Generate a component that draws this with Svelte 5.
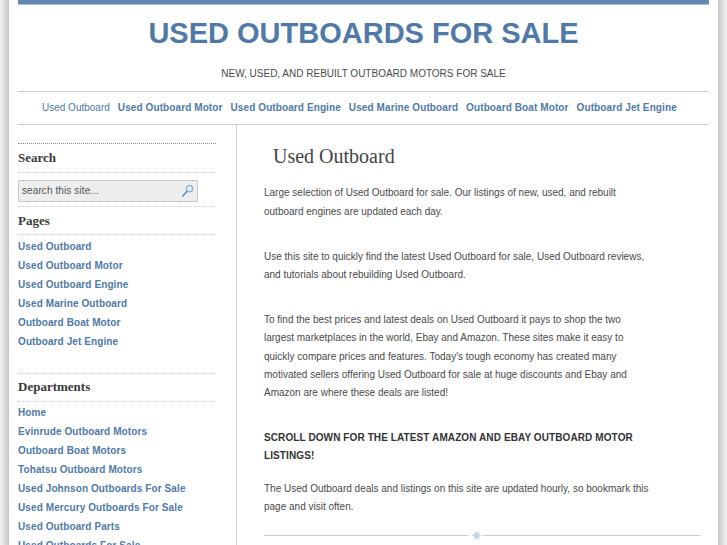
<script>
  const topNav = ['Used Outboard Motor', 'Used Outboard Engine', 'Used Marine Outboard', 'Outboard Boat Motor', 'Outboard Jet Engine'];
  const pages = ['Used Outboard', ...topNav];
  const departments = [
    'Home',
    'Evinrude Outboard Motors',
    'Outboard Boat Motors',
    'Tohatsu Outboard Motors',
    'Used Johnson Outboards For Sale',
    'Used Mercury Outboards For Sale',
    'Used Outboard Parts',
    'Used Outboards For Sale',
  ];
</script>

<div class="page">
  <div class="wrap">
    <div class="topbar"></div>
    <header class="header">
      <h1>USED OUTBOARDS FOR SALE</h1>
      <p>NEW, USED, AND REBUILT OUTBOARD MOTORS FOR SALE</p>
    </header>
    <nav class="topnav">
      <a href="#home" class="current">Used Outboard</a>
      {#each topNav as item}
        <a href="#top">{item}</a>
      {/each}
    </nav>
    <div class="columns">
      <aside class="sidebar">
        <h3 class="first">Search</h3>
        <div class="search">
          <span>search this site...</span>
          <svg width="13" height="14" viewBox="0 0 13 14" fill="none">
            <circle cx="8.5" cy="4.7" r="3.2" stroke="#8fb0cf" stroke-width="1.3" fill="#e6eef5" />
            <path d="M6 7.3 1.8 12" stroke="#6f94b8" stroke-width="1.8" stroke-linecap="round" />
          </svg>
        </div>
        <h3 class="pages">Pages</h3>
        <ul>
          {#each pages as item}
            <li><a href="#top">{item}</a></li>
          {/each}
        </ul>
        <h3 class="departments">Departments</h3>
        <ul>
          {#each departments as item}
            <li><a href="#top">{item}</a></li>
          {/each}
        </ul>
      </aside>
      <main class="content">
        <h2>Used Outboard</h2>
        <p>Large selection of Used Outboard for sale. Our listings of new, used, and rebuilt outboard engines are updated each day.</p>
        <p>Use this site to quickly find the latest Used Outboard for sale, Used Outboard reviews, and tutorials about rebuilding Used Outboard.</p>
        <p>To find the best prices and latest deals on Used Outboard it pays to shop the two largest marketplaces in the world, Ebay and Amazon. These sites make it easy to quickly compare prices and features. Today's tough economy has created many motivated sellers offering Used Outboard for sale at huge discounts and Ebay and Amazon are where these deals are listed!</p>
        <p class="strong">SCROLL DOWN FOR THE LATEST AMAZON AND EBAY OUTBOARD MOTOR LISTINGS!</p>
        <p class="last">The Used Outboard deals and listings on this site are updated hourly, so bookmark this page and visit often.</p>
        <div class="divider">
          <span class="rule left"></span>
          <svg width="9" height="9" viewBox="0 0 9 9" fill="none" stroke="#c3d4e6" stroke-width="1.2">
            <circle cx="4.5" cy="4.5" r="2.4" fill="#e4ecf4" />
            <path d="M4.5 0v9M0 4.5h9M1.3 1.3l6.4 6.4M7.7 1.3 1.3 7.7" stroke-width="0.9" />
          </svg>
          <span class="rule"></span>
        </div>
      </main>
    </div>
  </div>
</div>

<style>
  :global(body) {
    margin: 0;
    background: #fff;
  }

  .page {
    height: 545px;
    overflow: hidden;
    padding: 0 9px;
    font-family: "Liberation Sans", Arial, sans-serif;
    color: #444;
    background: linear-gradient(to right, #f2f2f2 0, #e6e6e6 3px, #c4c4c4 9px, #fff 9px, #fff 718px, #c4c4c4 718px, #e6e6e6 724px, #f2f2f2 727px);
  }

  .wrap {
    background: #fff;
    padding: 0 9px;
    min-height: 545px;
  }

  .topbar {
    height: 4px;
    background: #6389b3;
    border-bottom: 1px solid #a9c0d8;
  }

  .header {
    text-align: center;
  }

  h1 {
    margin: 0;
    padding-top: 12px;
    font-size: 29px;
    line-height: 33px;
    font-weight: 700;
    color: #4f79a8;
  }

  .header p {
    margin: 16px 0 0;
    font-size: 10px;
    line-height: 16px;
    color: #4a4a4a;
  }

  .topnav {
    margin-top: 9px;
    border-top: 1px solid #ccc;
    border-bottom: 1px solid #ccc;
    height: 31px;
    padding-bottom: 1px;
    display: flex;
    align-items: center;
    padding-left: 24px;
    gap: 8px;
    font-size: 10px;
  }

  a {
    color: #4f79a8;
    font-weight: 700;
    letter-spacing: 0.1px;
    text-decoration: none;
  }

  .topnav a.current {
    font-weight: 400;
    letter-spacing: 0;
  }

  .columns {
    display: flex;
  }

  .sidebar {
    width: 198px;
    padding-top: 18px;
    padding-right: 20px;
    border-right: 1px solid #ccc;
    flex: none;
    min-height: 420px;
  }

  h3 {
    margin: 0;
    font-family: "Liberation Serif", "Times New Roman", serif;
    font-size: 13px;
    line-height: 28px;
    height: 27px;
    font-weight: 700;
    color: #3a3a3a;
    border-bottom: 1px dotted #ccc;
  }

  h3.first {
    height: 28px;
    border-top: 1px dotted #888;
  }

  h3.pages {
    margin-top: 4px;
    border-top: 1px dotted #ccc;
  }

  h3.departments {
    margin-top: 22px;
    line-height: 26px;
    border-top: 1px dotted #ccc;
  }

  h3.departments + ul {
    margin-top: 1px;
  }

  .search {
    margin-top: 7px;
    width: 180px;
    height: 22px;
    box-sizing: border-box;
    border: 1px solid #c8c8c8;
    background: #eee;
    display: flex;
    align-items: center;
    justify-content: space-between;
    padding: 0 3px 1px;
    font-size: 10px;
    letter-spacing: 0.1px;
    color: #555;
  }

  ul {
    list-style: none;
    margin: 2px 0 0;
    padding: 0;
  }

  li {
    height: 19px;
    line-height: 19px;
    font-size: 10px;
  }

  .content {
    flex: 1;
    padding: 0 9px 0 27px;
    min-width: 0;
  }

  h2 {
    margin: 19px 0 0 9px;
    font-family: "Liberation Serif", "Times New Roman", serif;
    font-size: 20px;
    line-height: 24px;
    font-weight: 400;
    color: #444;
  }

  .content p {
    margin: 0 0 27px;
    width: 385px;
    font-size: 10px;
    line-height: 18.2px;
    color: #4a4a4a;
  }

  .content h2 + p {
    margin-top: 16.4px;
  }

  .content p.strong {
    font-weight: 700;
    letter-spacing: 0.1px;
    color: #333;
    margin-bottom: 14px;
  }

  .content p.last {
    margin-bottom: 15px;
  }

  .divider {
    display: flex;
    align-items: center;
    gap: 3px;
  }

  .divider svg {
    margin: 0 -1px 0 1px;
  }

  .rule {
    flex: 1;
    height: 1px;
    background: #ccc;
  }

  .rule.left {
    flex: none;
    width: 204px;
  }
</style>
